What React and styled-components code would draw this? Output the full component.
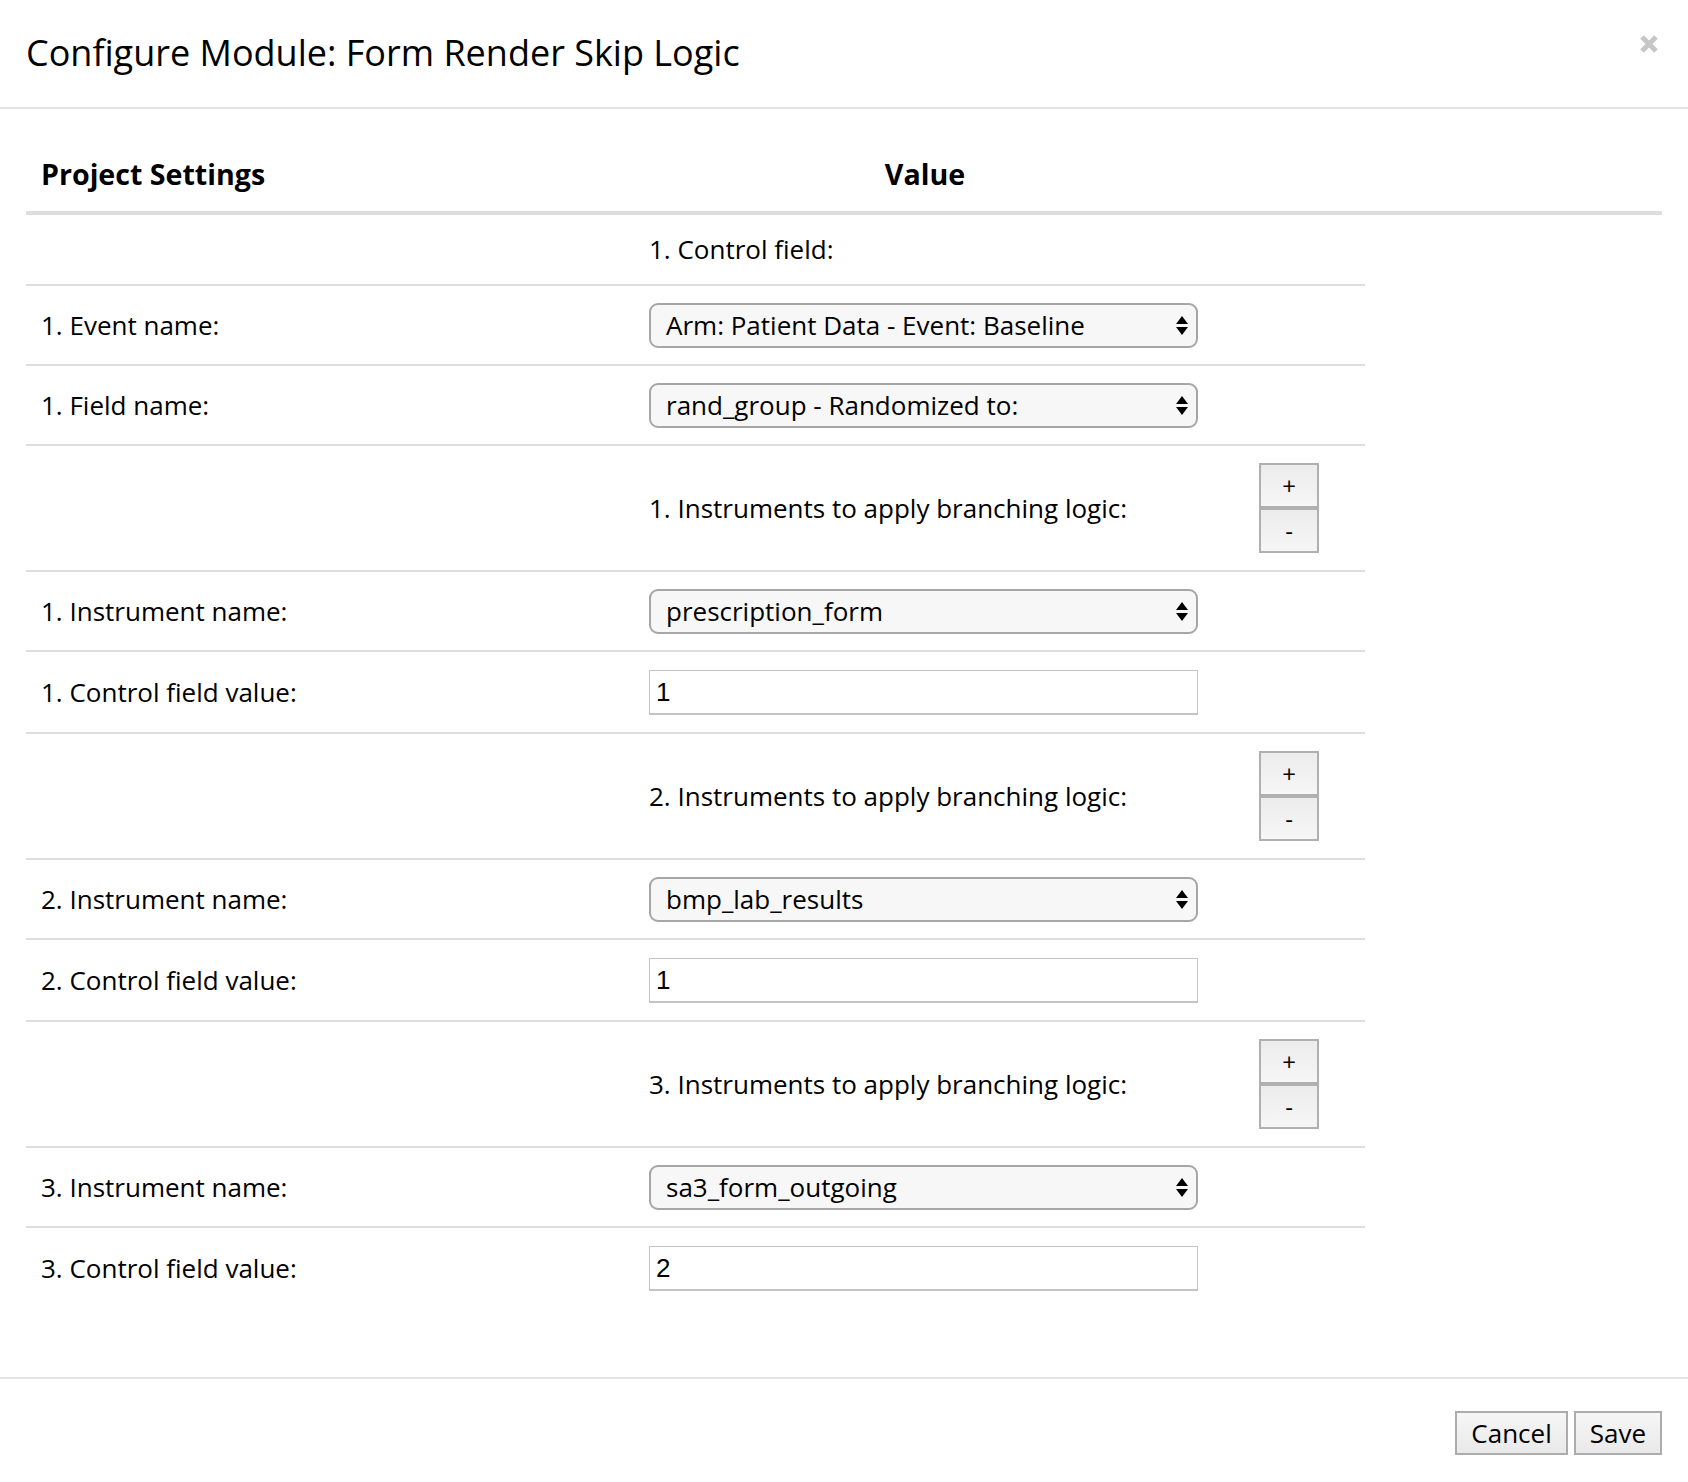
import React from "react";
import styled, { createGlobalStyle } from "styled-components";

const GlobalStyle = createGlobalStyle`
  html, body { margin: 0; padding: 0; background: #fff; }
  body {
    font-family: "Open Sans", "Liberation Sans", sans-serif;
    color: #000;
  }
  * { box-sizing: border-box; }
`;

const Modal = styled.div`
  width: 1688px;
  min-height: 1482px;
  display: flex;
  flex-direction: column;
  background: #fff;
`;

const Header = styled.div`
  display: flex;
  justify-content: space-between;
  align-items: flex-start;
  padding: 27px 30px 29px 26px;
  border-bottom: 2px solid #e5e5e5;
`;

const Title = styled.h4`
  margin: 0;
  font-size: 36px;
  font-weight: 400;
  line-height: 1.42857;
  color: #000;
`;

const CloseButton = styled.button`
  border: 0;
  background: transparent;
  padding: 0;
  margin-top: 8px;
  width: 18px;
  height: 18px;
  display: flex;
  cursor: pointer;
`;

const Body = styled.div`
  padding: 29px 26px 30px;
  flex: 1;
`;

const HeadRow = styled.div`
  display: grid;
  grid-template-columns: 608px 582px 1fr;
  border-bottom: 4px solid #dddddd;
  align-items: center;
`;

const HeadCell = styled.div`
  padding: 16px 15px 17px;
  font-size: 28.6px;
  font-weight: 700;
  line-height: 40px;
  text-align: ${(p) => (p.$center ? "center" : "left")};
`;

const SettingsTable = styled.div`
  width: 1339px;
  margin-bottom: 32px;
`;

const Row = styled.div`
  display: grid;
  grid-template-columns: 608px 608px 1fr;
  align-items: center;
  border-bottom: 2px solid ${(p) => (p.$last ? "transparent" : "#dddddd")};
`;

const Cell = styled.div`
  padding: ${(p) => (p.$tight ? "16px 15px" : "17px 15px 16px")};
  font-size: 26px;
  line-height: 37px;
  display: flex;
  align-items: center;
`;

const ButtonCell = styled.div`
  padding: 17px 0 17px 17px;
  display: flex;
`;

const SelectBox = styled.div`
  width: 549px;
  height: 45px;
  border: 2px solid #a6a6a6;
  border-radius: 9px;
  background: #f7f7f7;
  display: flex;
  align-items: center;
  justify-content: space-between;
  padding: 0 8px 0 15px;
  font-size: 26px;
  color: #000;
`;

const TextInput = styled.input`
  width: 549px;
  height: 45px;
  margin: 1px 0;
  border: 1px solid #c4c4c4;
  border-bottom-width: 2px;
  padding: 0 6px;
  font-family: "Liberation Sans", Arial, sans-serif;
  font-size: 26px;
  color: #000;
  background: #fff;
  outline: none;
`;

const Stepper = styled.div`
  display: flex;
  flex-direction: column;
  width: 60px;
`;

const StepButton = styled.button`
  width: 60px;
  height: 45px;
  border: 2px solid #b0b0b0;
  margin: 0;
  padding: 0;
  background: linear-gradient(#ececec, #f6f6f6);
  font-family: "Open Sans", sans-serif;
  font-size: 24px;
  line-height: 1;
  color: #000;
  cursor: pointer;
`;

const Footer = styled.div`
  display: flex;
  justify-content: flex-end;
  gap: 6px;
  padding: 32px 26px 27px;
  border-top: 2px solid #e5e5e5;
`;

const FooterButton = styled.button`
  height: 44px;
  padding: 0 14px;
  border: 2px solid #acacac;
  background: linear-gradient(#f6f6f6, #e9e9e9);
  font-family: "Open Sans", sans-serif;
  font-size: 26px;
  line-height: 1;
  color: #000;
  cursor: pointer;
`;

const SelectArrows = () => (
  <svg width="12" height="19" viewBox="0 0 12 19">
    <polygon points="6,0 12,8 0,8" fill="#000" />
    <polygon points="0,11 12,11 6,19" fill="#000" />
  </svg>
);

const CloseIcon = () => (
  <svg width="18" height="18" viewBox="0 0 18 18">
    <path d="M2 2 L16 16 M16 2 L2 16" stroke="#c6c6c6" strokeWidth="5" strokeLinecap="butt" />
  </svg>
);

const rows = [];
rows.push({ type: "heading", value: "1. Control field:" });
rows.push({ type: "select", label: "1. Event name:", value: "Arm: Patient Data - Event: Baseline" });
rows.push({ type: "select", label: "1. Field name:", value: "rand_group - Randomized to:" });
const instruments = [
  ["prescription_form", "1"],
  ["bmp_lab_results", "1"],
  ["sa3_form_outgoing", "2"],
];
instruments.forEach(([name, val], i) => {
  const n = i + 1;
  rows.push({ type: "repeat", value: `${n}. Instruments to apply branching logic:` });
  rows.push({ type: "select", label: `${n}. Instrument name:`, value: name });
  rows.push({ type: "input", label: `${n}. Control field value:`, value: val });
});

const SettingRow = ({ row, last }) => {
  if (row.type === "heading") {
    return (
      <Row $last={last}>
        <Cell $tight />
        <Cell $tight>{row.value}</Cell>
      </Row>
    );
  }
  if (row.type === "repeat") {
    return (
      <Row $last={last}>
        <Cell />
        <Cell>{row.value}</Cell>
        <ButtonCell>
          <Stepper>
            <StepButton>+</StepButton>
            <StepButton>-</StepButton>
          </Stepper>
        </ButtonCell>
      </Row>
    );
  }
  return (
    <Row $last={last}>
      <Cell>{row.label}</Cell>
      <Cell>
        {row.type === "select" ? (
          <SelectBox>
            <span>{row.value}</span>
            <SelectArrows />
          </SelectBox>
        ) : (
          <TextInput defaultValue={row.value} readOnly />
        )}
      </Cell>
    </Row>
  );
};

export default function App() {
  return (
    <>
      <GlobalStyle />
      <Modal>
        <Header>
          <Title>Configure Module: Form Render Skip Logic</Title>
          <CloseButton aria-label="Close">
            <CloseIcon />
          </CloseButton>
        </Header>
        <Body>
          <HeadRow>
            <HeadCell>Project Settings</HeadCell>
            <HeadCell $center>Value</HeadCell>
            <HeadCell />
          </HeadRow>
          <SettingsTable>
            {rows.map((r, i) => (
              <SettingRow key={i} row={r} last={i === rows.length - 1} />
            ))}
          </SettingsTable>
        </Body>
        <Footer>
          <FooterButton>Cancel</FooterButton>
          <FooterButton>Save</FooterButton>
        </Footer>
      </Modal>
    </>
  );
}
